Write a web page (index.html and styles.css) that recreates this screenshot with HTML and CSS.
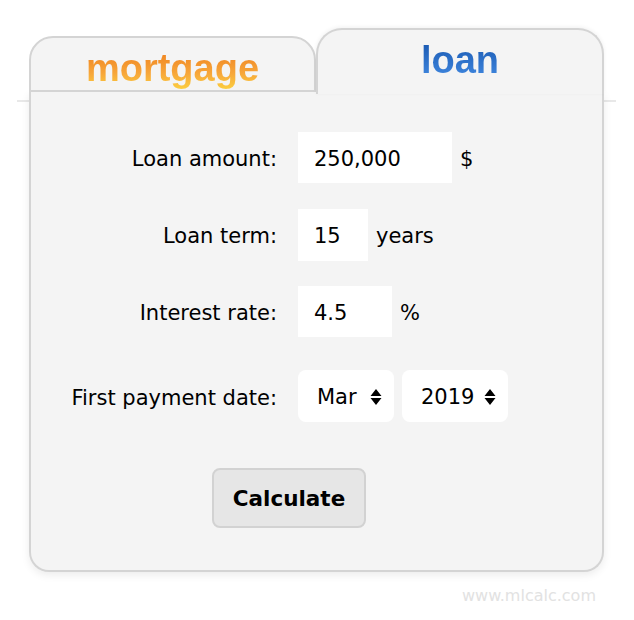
FILE: index.html
```html
<!DOCTYPE html>
<html>
<head>
<meta charset="utf-8">
<link rel="stylesheet" href="styles.css">
</head>
<body>
<div class="wrap">
  <div class="tabs">
    <div class="tab tab-mortgage"><span class="tab-text grad-orange">mortgage</span></div>
    <div class="tab tab-loan"><span class="tab-text grad-blue">loan</span></div>
  </div>
  <div class="panel">
    <div class="form">
      <div class="label">Loan amount:</div>
      <div class="field"><div class="input w-amount">250,000</div><span class="unit">$</span></div>
      <div class="label">Loan term:</div>
      <div class="field"><div class="input w-term">15</div><span class="unit">years</span></div>
      <div class="label">Interest rate:</div>
      <div class="field"><div class="input w-rate">4.5</div><span class="unit">%</span></div>
      <div class="label late">First payment date:</div>
      <div class="field late">
        <div class="select w-month">Mar<svg class="arrows" width="12" height="18" viewBox="0 0 12 18"><path d="M6 1 L11.5 8 H0.5 Z M0.5 10 H11.5 L6 17 Z" fill="#000"/></svg></div>
        <div class="select w-year">2019<svg class="arrows" width="12" height="18" viewBox="0 0 12 18"><path d="M6 1 L11.5 8 H0.5 Z M0.5 10 H11.5 L6 17 Z" fill="#000"/></svg></div>
      </div>
    </div>
    <div class="actions"><button class="btn">Calculate</button></div>
  </div>
  <div class="credit">www.mlcalc.com</div>
</div>
</body>
</html>
```
FILE: styles.css
```css
html, body { margin: 0; padding: 0; background: #fff; }
body { font-family: "DejaVu Sans", Verdana, sans-serif; }
.wrap { position: relative; width: 575px; margin: 28px 0 0 29px; }
.wrap::before { content: ""; position: absolute; left: -12px; right: -12px; top: 72px; height: 2px; background: #e8e8e8; }
.tabs { display: flex; height: 64px; position: relative; z-index: 2; }
.tab { box-sizing: border-box; background: #f4f4f4; border: 2px solid #d4d4d4; border-radius: 26px 26px 0 0; display: flex; justify-content: center; box-shadow: 0 -1px 4px rgba(0,0,0,0.06); }
.tab-mortgage { width: 287px; margin-top: 8px; height: 56px; border-bottom: 2px solid #d4d4d4; padding-top: 10px; box-shadow: none; border-radius: 24px 24px 0 0; }
.tab-loan { width: 288px; margin-left: 0; height: 66px; border-bottom: none; padding-top: 10px; margin-bottom: -2px; }
.tab-text { font-family: "Liberation Sans", Arial, sans-serif; font-weight: bold; font-size: 38px; line-height: 40px; -webkit-background-clip: text; background-clip: text; color: transparent; }
.grad-orange { background-image: linear-gradient(#ee7d1c, #f7a63a 60%, #fcd040); }
.grad-blue { background-image: linear-gradient(#1756ae, #3a80d8 60%, #6aa6ee); }
.panel { position: relative; z-index: 1; box-sizing: border-box; background: #f4f4f4; border: 2px solid #d4d4d4; border-top: none; border-radius: 0 0 20px 20px; height: 480px; box-shadow: 0 3px 8px rgba(0,0,0,0.08); padding-top: 40px; }
.form { display: grid; grid-template-columns: 246px auto; column-gap: 21px; row-gap: 25px; align-items: center; }
.label { text-align: right; font-size: 21px; color: #000; padding-top: 3px; }
.field { display: flex; align-items: center; gap: 8px; }
.input { box-sizing: border-box; height: 51px; background: #fff; font-size: 21px; padding: 2px 0 0 16px; display: flex; align-items: center; }
.w-amount { width: 154px; }
.w-term { width: 70px; }
.w-rate { width: 94px; }
.unit { font-size: 21px; padding-top: 3px; }
.field:nth-child(4) .input { margin-top: 1px; height: 52px; }
.select { box-sizing: border-box; height: 52px; background: #fff; border-radius: 8px; font-size: 21px; display: flex; align-items: center; justify-content: space-between; padding: 2px 12px 0 19px; }
.w-month { width: 96px; }
.w-year { width: 106px; }
.late { margin-top: 8px; }
.actions { display: flex; padding-left: 181px; margin-top: 46px; }
.btn { width: 154px; height: 60px; background: #e6e6e6; border: 2px solid #d2d2d2; border-radius: 8px; font-family: "DejaVu Sans", Verdana, sans-serif; font-weight: bold; font-size: 21.5px; color: #000; padding: 0; }
.credit { text-align: right; margin-top: 14px; padding-right: 8px; font-family: "DejaVu Sans", Verdana, sans-serif; font-size: 16px; color: #e2e2e2; }
```
